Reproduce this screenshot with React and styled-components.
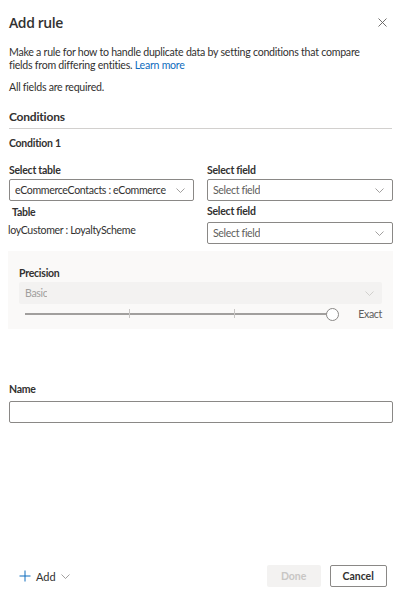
import React from "react";
import styled, { createGlobalStyle } from "styled-components";

const Global = createGlobalStyle`
  html, body { margin: 0; padding: 0; background: #fff; }
  body { font-family: Lato, "Open Sans", sans-serif; color: #323130; }
  * { box-sizing: border-box; }
`;

const Panel = styled.div`
  width: 400px;
  height: 595px;
  display: flex;
  flex-direction: column;
  padding: 0 7px 0 9px;
  font-size: 10.6px;
  letter-spacing: -0.35px;
`;

const Header = styled.div`
  display: flex;
  align-items: center;
  justify-content: space-between;
  height: 22px;
  margin-top: 11px;
`;

const Title = styled.h1`
  margin: 0;
  font-family: "Open Sans", sans-serif;
  font-size: 14px;
  font-weight: 600;
  letter-spacing: -0.4px;
  color: #323130;
`;

const Close = styled.button`
  border: 0;
  background: none;
  padding: 0;
  margin-right: 5px;
  width: 12px;
  height: 12px;
  display: flex;
  align-items: center;
  justify-content: center;
`;

const Para = styled.p`
  margin: ${(p) => p.$mt || 0}px 0 0;
  line-height: 13px;
  color: #323130;
  padding-right: 30px;
  letter-spacing: -0.25px;
`;

const Link = styled.a`
  color: #0f6cbd;
  text-decoration: none;
`;

const SectionTitle = styled.h2`
  margin: 15px 0 0;
  font-size: 12px;
  font-weight: 700;
  line-height: 16px;
  letter-spacing: -0.2px;
`;

const Divider = styled.hr`
  border: 0;
  border-top: 1px solid #d2d0ce;
  margin: 3px 0 0;
  width: 383px;
`;

const SubTitle = styled.div`
  margin-top: 7px;
  font-weight: 700;
  font-size: 10.5px;
  line-height: 14px;
  letter-spacing: -0.25px;
`;

const Grid = styled.div`
  display: grid;
  grid-template-columns: 185px 186px;
  column-gap: 13px;
  margin-top: 13px;
`;

const Col = styled.div`
  display: flex;
  flex-direction: column;
`;

const Label = styled.div`
  font-weight: 700;
  font-size: 10.5px;
  line-height: 14px;
  height: 14px;
  letter-spacing: -0.25px;
  padding-left: ${(p) => p.$indent || 0}px;
  margin-top: ${(p) => p.$mt || 0}px;
`;

const Value = styled.div`
  height: 22px;
  display: flex;
  align-items: center;
  margin-left: -1px;
`;

const Select = styled.div`
  height: 22px;
  margin-top: ${(p) => p.$mt || 0}px;
  border: ${(p) => (p.$disabled ? "0" : "1px solid #8a8886")};
  border-radius: 2px;
  background: ${(p) => (p.$disabled ? "#f3f2f1" : "#fff")};
  display: flex;
  align-items: center;
  justify-content: space-between;
  gap: 6px;
  padding: 0 8px 0 ${(p) => (p.$disabled ? 6 : 5)}px;
  color: ${(p) => (p.$disabled ? "#a19f9d" : p.$placeholder ? "#605e5c" : "#323130")};
  white-space: nowrap;
`;

const SelectText = styled.span`
  overflow: hidden;
  text-overflow: ellipsis;
  min-width: 0;
`;

const Chevron = ({ color = "#8a8886" }) => (
  <svg width="9" height="5" viewBox="0 0 9 5" fill="none" style={{ flex: "none" }}>
    <path d="M0.5 0.5 L4.5 4.5 L8.5 0.5" stroke={color} strokeWidth="0.8" />
  </svg>
);

const Precision = styled.div`
  margin: 7px 0 0 -1px;
  width: 385px;
  height: 78px;
  background: #faf9f8;
  padding: 15px 11px 0 11px;
`;

const SliderRow = styled.div`
  display: flex;
  align-items: center;
  height: 20px;
`;

const Track = styled.div`
  position: relative;
  margin-left: 6px;
  width: 308px;
  height: 2px;
  background: #a19f9d;
`;

const Tick = styled.span`
  position: absolute;
  top: -4px;
  width: 1px;
  height: 9px;
  background: #c8c6c4;
`;

const Thumb = styled.span`
  position: absolute;
  right: -6px;
  top: -5.5px;
  width: 13px;
  height: 13px;
  border-radius: 50%;
  background: #fff;
  border: 1px solid #8a8886;
`;

const SliderValue = styled.span`
  margin-left: auto;
  color: #605e5c;
`;

const NameLabel = styled(Label)`
  margin-top: 53px;
`;

const Input = styled.input`
  margin-top: 5px;
  width: 384px;
  height: 22px;
  border: 1px solid #8a8886;
  border-radius: 2px;
  font: inherit;
`;

const Footer = styled.div`
  margin-top: auto;
  margin-bottom: 8px;
  display: flex;
  align-items: center;
  height: 22px;
  padding-left: 10px;
`;

const AddButton = styled.button`
  border: 0;
  background: none;
  padding: 0;
  display: flex;
  align-items: center;
  gap: 5px;
  font: inherit;
  font-size: 11px;
  color: #323130;
`;

const Btn = styled.button`
  width: ${(p) => p.$w}px;
  height: 22px;
  border-radius: 2px;
  font: inherit;
  font-weight: 700;
  font-size: 10.5px;
  padding: 0;
  margin-left: ${(p) => p.$ml || 0}px;
  border: ${(p) => (p.$disabled ? "0" : "1px solid #8a8886")};
  background: ${(p) => (p.$disabled ? "#f3f2f1" : "#fff")};
  color: ${(p) => (p.$disabled ? "#c8c6c4" : "#323130")};
`;

export default function App() {
  return (
    <>
      <Global />
      <Panel>
        <Header>
          <Title>Add rule</Title>
          <Close aria-label="Close">
            <svg width="9" height="9" viewBox="0 0 9 9">
              <path d="M0.5 0.5 L8.5 8.5 M8.5 0.5 L0.5 8.5" stroke="#605e5c" strokeWidth="0.9" />
            </svg>
          </Close>
        </Header>
        <Para $mt={13}>
          Make a rule for how to handle duplicate data by setting conditions that compare fields from
          differing entities. <Link href="#">Learn more</Link>
        </Para>
        <Para $mt={9}>All fields are required.</Para>
        <SectionTitle>Conditions</SectionTitle>
        <Divider />
        <SubTitle>Condition 1</SubTitle>
        <Grid>
          <Col>
            <Label>Select table</Label>
            <Select $mt={2}>
              <SelectText>eCommerceContacts : eCommerce</SelectText>
              <Chevron />
            </Select>
            <Label $mt={4} $indent={3}>Table</Label>
            <Value>loyCustomer : LoyaltyScheme</Value>
          </Col>
          <Col>
            <Label>Select field</Label>
            <Select $mt={2} $placeholder>
              <SelectText>Select field</SelectText>
              <Chevron />
            </Select>
            <Label $mt={3}>Select field</Label>
            <Select $mt={4} $placeholder>
              <SelectText>Select field</SelectText>
              <Chevron />
            </Select>
          </Col>
        </Grid>
        <Precision>
          <Label>Precision</Label>
          <Select $mt={2} $disabled>
            <SelectText>Basic</SelectText>
            <Chevron color="#c8c6c4" />
          </Select>
          <SliderRow>
            <Track>
              <Tick style={{ left: "104px" }} />
              <Tick style={{ left: "209px" }} />
              <Thumb />
            </Track>
            <SliderValue>Exact</SliderValue>
          </SliderRow>
        </Precision>
        <NameLabel>Name</NameLabel>
        <Input />
        <Footer>
          <AddButton>
            <svg width="12" height="12" viewBox="0 0 12 12">
              <path d="M6 0.5 V11.5 M0.5 6 H11.5" stroke="#0f6cbd" strokeWidth="1" />
            </svg>
            Add
            <Chevron />
          </AddButton>
          <Btn $disabled $w={54} $ml={197}>Done</Btn>
          <Btn $w={57} $ml={9}>Cancel</Btn>
        </Footer>
      </Panel>
    </>
  );
}
